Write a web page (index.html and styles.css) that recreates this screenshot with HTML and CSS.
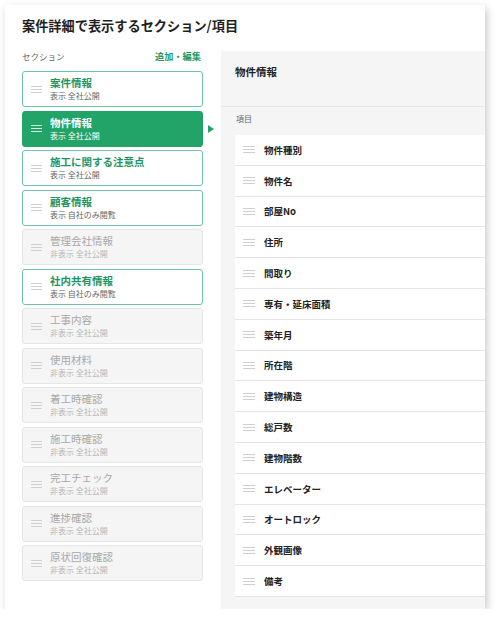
FILE: index.html
```html
<!DOCTYPE html>
<html lang="ja">

<head>
    <meta charset="UTF-8">
    <meta name="viewport" content="width=device-width, initial-scale=1.0">
    <title>案件詳細で表示するセクション/項目</title>
    <link rel="stylesheet" href="styles.css">
</head>

<body>
    <div class="sheet">
        <h1 class="title">案件詳細で表示するセクション/項目</h1>
        <div class="content">
            <div class="sections">
                <div class="sections-head">
                    <span class="label">セクション</span>
                    <a class="edit">追加・編集</a>
                </div>
                <div class="section">
                    <span class="handle"></span>
                    <div><p class="name">案件情報</p><p class="sub">表示 全社公開</p></div>
                </div>
                <div class="section selected">
                    <span class="handle"></span>
                    <div><p class="name">物件情報</p><p class="sub">表示 全社公開</p></div>
                    <span class="pointer"></span>
                </div>
                <div class="section">
                    <span class="handle"></span>
                    <div><p class="name">施工に関する注意点</p><p class="sub">表示 全社公開</p></div>
                </div>
                <div class="section">
                    <span class="handle"></span>
                    <div><p class="name">顧客情報</p><p class="sub">表示 自社のみ閲覧</p></div>
                </div>
                <div class="section off">
                    <span class="handle"></span>
                    <div><p class="name">管理会社情報</p><p class="sub">非表示 全社公開</p></div>
                </div>
                <div class="section">
                    <span class="handle"></span>
                    <div><p class="name">社内共有情報</p><p class="sub">表示 自社のみ閲覧</p></div>
                </div>
                <div class="section off">
                    <span class="handle"></span>
                    <div><p class="name">工事内容</p><p class="sub">非表示 全社公開</p></div>
                </div>
                <div class="section off">
                    <span class="handle"></span>
                    <div><p class="name">使用材料</p><p class="sub">非表示 全社公開</p></div>
                </div>
                <div class="section off">
                    <span class="handle"></span>
                    <div><p class="name">着工時確認</p><p class="sub">非表示 全社公開</p></div>
                </div>
                <div class="section off">
                    <span class="handle"></span>
                    <div><p class="name">施工時確認</p><p class="sub">非表示 全社公開</p></div>
                </div>
                <div class="section off">
                    <span class="handle"></span>
                    <div><p class="name">完工チェック</p><p class="sub">非表示 全社公開</p></div>
                </div>
                <div class="section off">
                    <span class="handle"></span>
                    <div><p class="name">進捗確認</p><p class="sub">非表示 全社公開</p></div>
                </div>
                <div class="section off">
                    <span class="handle"></span>
                    <div><p class="name">原状回復確認</p><p class="sub">非表示 全社公開</p></div>
                </div>
            </div>

            <div class="detail">
                <div class="detail-head">物件情報</div>
                <div class="items-label">項目</div>
                <ul class="items">
                    <li><span class="handle"></span>物件種別</li>
                    <li><span class="handle"></span>物件名</li>
                    <li><span class="handle"></span>部屋No</li>
                    <li><span class="handle"></span>住所</li>
                    <li><span class="handle"></span>間取り</li>
                    <li><span class="handle"></span>専有・延床面積</li>
                    <li><span class="handle"></span>築年月</li>
                    <li><span class="handle"></span>所在階</li>
                    <li><span class="handle"></span>建物構造</li>
                    <li><span class="handle"></span>総戸数</li>
                    <li><span class="handle"></span>建物階数</li>
                    <li><span class="handle"></span>エレベーター</li>
                    <li><span class="handle"></span>オートロック</li>
                    <li><span class="handle"></span>外観画像</li>
                    <li><span class="handle"></span>備考</li>
                </ul>
            </div>
        </div>
    </div>
</body>

</html>
```

FILE: styles.css
```css
body {
    margin: 0;
    background: #ffffff;
    font-family: "Noto Sans CJK JP", "Noto Sans", sans-serif;
    color: #222;
}

p {
    margin: 0;
}

.sheet {
    width: 480px;
    height: 604px;
    margin: 5px 0 0 5px;
    background: #fff;
    box-shadow: 2px 3px 8px rgba(0, 0, 0, 0.22);
    display: flex;
    flex-direction: column;
    overflow: hidden;
}

.title {
    margin: 0;
    height: 44px;
    box-sizing: border-box;
    padding: 12px 0 0 17px;
    font-size: 13.2px;
    line-height: 18px;
    font-weight: bold;
    color: #1f1f1f;
}

.content {
    flex: 1;
    display: flex;
}

/* left column */
.sections {
    width: 181px;
    padding: 0 18px 0 17px;
}

.sections-head {
    display: flex;
    justify-content: space-between;
    align-items: flex-start;
    height: 22px;
    padding-right: 2px;
    line-height: 14px;
}

.label {
    font-size: 8.5px;
    color: #666;
}

.edit {
    font-size: 9.2px;
    font-weight: bold;
    color: #1f9a62;
}

.section {
    position: relative;
    display: flex;
    align-items: center;
    height: 36px;
    box-sizing: border-box;
    margin-bottom: 3.5px;
    border: 1px solid #6fc2a2;
    border-radius: 3px;
    background: #fff;
}

.section .handle {
    margin: 0 8px 0 8px;
}

.section .name {
    font-size: 10.5px;
    line-height: 14px;
    font-weight: bold;
    color: #1f9462;
}

.section .sub {
    font-size: 8px;
    line-height: 12px;
    color: #666;
}

.section.selected {
    background: #22a367;
    border-color: #22a367;
}

.section.selected .name,
.section.selected .sub {
    color: #fff;
}

.section.selected .handle,
.section.selected .handle::before,
.section.selected .handle::after {
    background: #d9f0e4;
}

.pointer {
    position: absolute;
    right: -12px;
    top: 13px;
    border-left: 6px solid #22a367;
    border-top: 4.5px solid transparent;
    border-bottom: 4.5px solid transparent;
}

.section.off {
    background: #f5f5f5;
    border-color: #e6e6e6;
}

.section.off .name {
    color: #a9a9a9;
    font-weight: normal;
}

.section.off .sub {
    color: #b5b5b5;
}

/* drag handle: three thin lines */
.handle {
    position: relative;
    display: inline-block;
    flex: none;
    width: 11px;
    height: 1px;
    background: #cfcfcf;
}

.handle::before,
.handle::after {
    content: "";
    position: absolute;
    left: 0;
    width: 11px;
    height: 1px;
    background: #cfcfcf;
}

.handle::before {
    top: -3px;
}

.handle::after {
    top: 3px;
}

/* right panel */
.detail {
    flex: 1;
    margin-top: 2px;
    background: #f5f5f5;
    display: flex;
    flex-direction: column;
}

.detail-head {
    height: 56px;
    box-sizing: border-box;
    padding: 13px 0 0 14px;
    font-size: 10.5px;
    font-weight: bold;
    border-bottom: 1px solid #e6e6e6;
}

.items-label {
    height: 28px;
    box-sizing: border-box;
    padding: 6px 0 0 15px;
    font-size: 8px;
    color: #666;
}

.items {
    list-style: none;
    margin: 0 0 0 14px;
    padding: 0;
}

.items li {
    display: flex;
    align-items: center;
    height: 29.8px;
    background: #fff;
    border-bottom: 1px solid #e3e3e3;
    font-size: 9.5px;
    font-weight: bold;
    color: #222;
}

.items li .handle {
    width: 12px;
    margin: 0 9px 0 8px;
}

.items li .handle::before,
.items li .handle::after {
    width: 12px;
}
```
